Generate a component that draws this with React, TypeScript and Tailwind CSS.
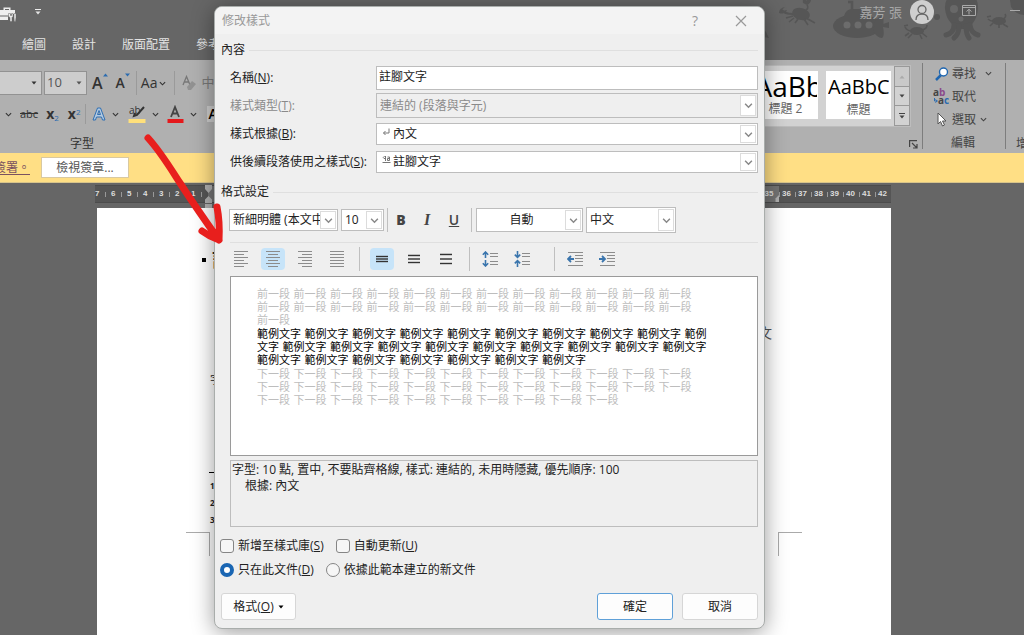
import React, { ReactNode } from "react";

const repeat = (word: string, times: number) => Array(times).fill(word).join(" ");

function Caret({ className = "" }: { className?: string }) {
  return (
    <svg width="6" height="4" viewBox="0 0 6 4" className={className} aria-hidden="true">
      <path d="M0.5 0.5h5L3 3.5z" fill="currentColor" />
    </svg>
  );
}

function Chevron({ size = 7 }: { size?: number }) {
  return (
    <svg width={size} height={size} viewBox="0 0 8 8" fill="none" stroke="currentColor" strokeWidth="1.3" aria-hidden="true">
      <path d="M1 2.5L4 5.5L7 2.5" />
    </svg>
  );
}

/* ---------- Title bar ---------- */

function SeaDoodles() {
  return (
    <svg width="264" height="60" viewBox="760 0 264 60" fill="#565656" className="absolute right-0 top-0" aria-hidden="true">
      <g>
        <ellipse cx="801" cy="14" rx="9" ry="6" transform="rotate(15 801 14)" />
        <path d="M793 14q-9 0-11-4" stroke="#565656" strokeWidth="2" fill="none" />
        <path d="M779 13q0-5 6-6q-3 2-3 4l5-1q-2 5-8 3zM803 3q-1-6 4-8l-1 6l5-5q1 7-4 9z" />
        <path d="M806 10q3-2 1-5M793 16l-7 2M794 18l-5 4M806 18l9 5M804 19l4 6M798 19l-3 4" stroke="#565656" strokeWidth="1.600" fill="none" />
      </g>
      <g>
        <ellipse cx="857" cy="26" rx="24" ry="12" />
        <path d="M844 16q2-7 8-7h8q7 0 8 7z" />
        <path d="M852 10V2h-4" stroke="#565656" strokeWidth="2.500" fill="none" />
        <path d="M875 22q5-8 8-7q1 8 0 12q2 9-1 11q-5 0-9-7zM883 24l6-2v6l-6-1z" />
        <g fill="#6c6c6c">
          <circle cx="847" cy="25" r="3.500" />
          <circle cx="858" cy="25" r="3.500" />
          <circle cx="869" cy="25" r="3.500" />
        </g>
      </g>
      <g>
        <ellipse cx="917" cy="31" rx="7" ry="4" />
        <path d="M905 27q2 4 7 4M904 26l4-1M922 30q5-1 5-5M909 33l-4 3M912 34l-4 4M922 33l5 4M920 35l2 4" stroke="#565656" strokeWidth="1.600" fill="none" />
        <circle cx="937" cy="17" r="3" />
      </g>
      <g>
        <path d="M945 9q-1-16 17-16q17 0 16 16q-1 9-5 14l-4 6h-14l-4-6q-5-5-6-14z" />
        <path d="M954 25q0 8-8 10M959 26q0 8-5 12M966 26q0 8 3 12M970 25q1 8 8 10" stroke="#565656" strokeWidth="5" fill="none" strokeLinecap="round" />
        <circle cx="954" cy="9" r="4" fill="#686868" />
        <circle cx="961" cy="19" r="2.500" fill="#686868" />
      </g>
      <g>
        <ellipse cx="999" cy="21" rx="7" ry="4" />
        <path d="M988 19q3 3 7 2M987 17l4-1M1003 19q4-2 2-5M993 23l-3 3M1003 24l5 3M999 24v4" stroke="#565656" strokeWidth="1.600" fill="none" />
        <path d="M1010 0h14v15q-8 0-13-8zM760 24l6 8l3 6l-5-1z" />
      </g>
    </svg>
  );
}

function TitleBar() {
  return (
    <header className="relative flex h-[60px] flex-col bg-[#666] text-[#e4e4e4]">
      <SeaDoodles />
      <div className="relative flex h-6 items-center">
        <button aria-label="工具箱" className="mt-1 text-[#eee]">
          <svg width="17" height="15" viewBox="0 0 17 15" fill="currentColor">
            <path d="M0 3h3.500V0.500h7V3H15v4H9v1.500H0zM5 2v1h4V2zM0 9.500h8V13H0z" fillRule="evenodd" />
            <path d="M8.500 6.500h2v2h1v-2h1.500v3l-1 1V14.500h-2v-4l-1.500-1zM14 6.500h2v4l-.5 4h-1.200l-.3-4z" stroke="#666" strokeWidth="0.500" />
          </svg>
        </button>
        <button aria-label="自訂快速存取工具列" className="ml-[18px] flex flex-col items-center gap-px">
          <span className="h-px w-[6px] bg-[#eee]" />
          <Caret />
        </button>
        <span className="ml-auto text-[13px] leading-4 text-[#a8a8a8]">嘉芳 張</span>
        <button aria-label="帳戶" className="ml-2 flex size-6 items-center justify-center rounded-full bg-[#cfcfcf] text-[#666]">
          <svg width="16" height="17" viewBox="0 0 16 17" fill="none" stroke="currentColor" strokeWidth="1.300">
            <circle cx="8" cy="5.500" r="4" />
            <path d="M2 16q0-6 6-6t6 6" />
          </svg>
        </button>
        <button aria-label="功能區顯示選項" className="-mt-1 ml-7 text-[#aaa]">
          <svg width="14" height="11" viewBox="0 0 14 11" fill="none" stroke="currentColor">
            <path d="M0.500 0.500h13v10H0.500zM0.500 2.500h13M7 9.500V4.500M4.500 6.500L7 4.300l2.500 2.200" />
          </svg>
        </button>
        <button aria-label="最小化" className="-mt-1 ml-[34px] flex h-4 w-[14px] items-center">
          <span className="h-px w-[10px] bg-[#aaa]" />
        </button>
      </div>
      <nav className="relative ml-[22px] mt-[13px] flex gap-[26px] text-xs leading-4">
        {["繪圖", "設計", "版面配置", "參考資料"].map((tab) => (
          <button key={tab}>{tab}</button>
        ))}
      </nav>
    </header>
  );
}

/* ---------- Ribbon ---------- */

function FontGroup() {
  return (
    <section className="flex w-[230px] flex-col text-[#333]">
      <div className="mt-[11px] flex h-6 items-center">
        <button aria-label="字型名稱" className="flex h-6 w-[42px] items-center justify-end border border-l-0 border-[#929292] bg-[#cdcdcd] pr-1">
          <Caret />
        </button>
        <button aria-label="字型大小" className="ml-[2px] flex h-6 w-[43px] items-center justify-between border border-[#929292] bg-[#cdcdcd] pl-[2px] pr-1 text-[13px] text-[#555]">
          10
          <Caret />
        </button>
        <button aria-label="放大字型" className="ml-[5px] flex items-start text-base font-semibold leading-5">
          A
          <svg width="5" height="4" viewBox="0 0 5 4"><path d="M2.500 0.500L5 3.500H0z" fill="#2c6cb0" /></svg>
        </button>
        <button aria-label="縮小字型" className="ml-2 flex items-start text-sm font-semibold leading-5">
          A
          <svg width="5" height="4" viewBox="0 0 5 4"><path d="M0 0.500h5L2.500 3.500z" fill="#2c6cb0" /></svg>
        </button>
        <span className="ml-[6px] h-6 w-px bg-[#9a9a9a]" />
        <button aria-label="大小寫轉換" className="ml-1 flex items-center gap-[2px] text-sm">
          Aa <Chevron />
        </button>
        <span className="ml-2 h-6 w-px bg-[#9a9a9a]" />
        <button aria-label="清除格式" className="ml-[7px] flex text-[#777]">
          <svg width="14" height="16" viewBox="0 0 14 16" fill="none">
            <path d="M1 10L4.500 1.500L8 10M2.200 7h4.500" stroke="#777" strokeWidth="1.300" />
            <path d="M5 12l5-6l4 3l-5 6h-3z" fill="#929292" />
          </svg>
        </button>
        <button className="ml-[5px] text-[13px] text-[#777]">中</button>
      </div>
      <div className="mt-2 flex h-[22px] items-center">
        <span className="ml-[5px]"><Chevron /></span>
        <button aria-label="刪除線" className="ml-2 text-[11px] line-through">abc</button>
        <button aria-label="下標" className="ml-2 text-sm font-bold leading-4">
          x<sub className="text-[8px] font-normal text-[#2c6cb0]">2</sub>
        </button>
        <button aria-label="上標" className="ml-[9px] text-sm font-bold leading-4">
          x<sup className="text-[8px] font-normal text-[#2c6cb0]">2</sup>
        </button>
        <span className="ml-[5px] h-5 w-px bg-[#9a9a9a]" />
        <button aria-label="文字效果" className="ml-[6px] flex items-center gap-[6px]">
          <svg width="14" height="14" viewBox="0 0 14 14" fill="#b4cbe2" stroke="#2f6fb3">
            <path d="M1 13L5.500 1h3L13 13h-2.500l-1-3h-5l-1 3zM5.500 7.500h3L7 3.500z" />
          </svg>
          <Chevron />
        </button>
        <button aria-label="醒目提示" className="ml-[9px] flex items-center gap-[6px]">
          <svg width="18" height="18" viewBox="0 0 18 18">
            <text x="1" y="9" fontSize="10" fill="#333">ab</text>
            <path d="M16 2l-7 8l-3 1l1-3" stroke="#333" strokeWidth="2" fill="none" />
            <path d="M0.500 14h17v4H0.500z" fill="#ffe07b" />
          </svg>
          <Chevron />
        </button>
        <button aria-label="字型色彩" className="ml-2 flex items-center gap-[6px]">
          <svg width="17" height="18" viewBox="0 0 17 18">
            <path d="M4 12L8 2l4 10M5.500 8.500h5" stroke="#444" strokeWidth="1.800" fill="none" />
            <path d="M0.500 14h16v4H0.500z" fill="#e5191c" />
          </svg>
          <Chevron />
        </button>
        <button aria-label="字元網底" className="ml-[10px] bg-[#cbcbcb] px-px text-sm font-semibold leading-4 text-black">A</button>
      </div>
      <span className="ml-[70px] mt-[11px] text-xs leading-4">字型</span>
    </section>
  );
}

function StyleGallery() {
  return (
    <section className="mt-[5px] flex w-[180px] flex-col items-end">
      <div className="flex border border-[#bdbdbd] bg-[#d2d2d2]">
        <button className="mr-2 mt-[5px] flex h-12 w-[65px] flex-col items-center overflow-hidden bg-white text-xs leading-4 text-[#666]">
          <span className="flex h-[30px] w-[62px] items-center overflow-hidden text-[28px] leading-7 text-black">AaBbC</span>
          標題 2
        </button>
        <button className="mr-[3px] mt-[5px] flex h-12 w-[65px] flex-col items-center overflow-hidden bg-white text-xs leading-4 text-[#666]">
          <span className="flex h-[31px] w-[61px] items-center overflow-hidden text-[20px] leading-6 text-black">AaBbCc</span>
          標題
        </button>
        <div className="flex w-4 flex-col divide-y divide-[#999] border border-[#999]">
          <button aria-label="上一列" className="flex h-[20px] items-center justify-center bg-[#c9c9c9] text-[#aaa]"><Caret className="rotate-180" /></button>
          <button aria-label="下一列" className="flex h-[19px] items-center justify-center text-[#444]"><Caret /></button>
          <button aria-label="其他樣式" className="flex h-[19px] flex-col items-center justify-center gap-px text-[#444]">
            <span className="h-px w-[6px] bg-[#444]" />
            <Caret />
          </button>
        </div>
      </div>
      <button aria-label="樣式窗格" className="-mr-[7px] mt-[13px] text-[#444]">
        <svg width="9" height="9" viewBox="0 0 9 9" fill="none" stroke="currentColor" strokeWidth="1.200">
          <path d="M0.600 7V0.600H8M3 3l5 5M8 4v4H4" />
        </svg>
      </button>
    </section>
  );
}

function EditingGroup() {
  return (
    <section className="ml-[11px] mt-[3px] flex h-[86px] w-[84px] flex-col border-x border-[#7d7d7d] pl-3 text-xs leading-4 text-[#444]">
      <button className="mt-[3px] flex h-[15px] items-center">
        <svg width="14" height="14" viewBox="0 0 14 14" className="mr-[3px]">
          <path d="M1 13L6 8" stroke="#1f66b0" strokeWidth="2.500" />
          <circle cx="8.500" cy="5" r="4" fill="#fff" stroke="#1f66b0" strokeWidth="1.400" />
        </svg>
        尋找
        <span className="ml-[9px]"><Chevron /></span>
      </button>
      <button className="mt-2 flex h-[15px] items-center">
        <svg width="16" height="17" viewBox="0 0 16 17" className="-ml-[2px] mr-[3px]" fontSize="10" fontWeight="700">
          <text x="0" y="8" fill="#444">a<tspan fill="#8b4a8b">b</tspan></text>
          <text x="5" y="16" fill="#444">a<tspan fill="#2c6cb0">c</tspan></text>
          <path d="M1.500 10v3h3M2.500 11.300L4.200 13l-1.700 1.700" stroke="#2c6cb0" fill="none" />
        </svg>
        取代
      </button>
      <button className="mt-2 flex h-[15px] items-center">
        <svg width="10" height="15" viewBox="0 0 10 15" className="ml-[2px] mr-[5px]">
          <path d="M1 1v11l2.500-2.500L5.500 14l2-1L5.500 9H9z" fill="#fff" stroke="#555" />
        </svg>
        選取
        <span className="ml-1"><Chevron /></span>
      </button>
      <span className="ml-4 mt-2">編輯</span>
    </section>
  );
}

function Ribbon() {
  return (
    <div className="flex h-[93px] justify-between overflow-hidden bg-[#b0b0b0]">
      <FontGroup />
      <div className="flex">
        <StyleGallery />
        <EditingGroup />
        <section className="flex w-[18px] flex-col items-end justify-end overflow-hidden pb-px text-xs leading-4 text-[#444]">
          <span className="w-2 overflow-hidden whitespace-nowrap">增益集</span>
        </section>
      </div>
    </div>
  );
}

function MessageBar() {
  return (
    <div className="flex h-[30px] items-center border-b border-[#d8c48a] bg-[#ffdf85] text-xs text-[#555]">
      <a href="#signature" className="flex h-4 w-[30px] justify-end overflow-hidden whitespace-nowrap leading-4 text-[#7a5260] underline underline-offset-2">簽署。</a>
      <button className="ml-[11px] h-[21px] w-[88px] border border-[#d9c9a0] bg-white leading-4">檢視簽章...</button>
    </div>
  );
}

/* ---------- Document ---------- */

function Ruler() {
  return (
    <div className="mt-[2px] flex h-[18px] border-y border-[#4c4c4c] bg-[#737373] font-['Liberation_Sans',sans-serif] text-[8px] font-bold leading-4 text-[#ddd]">
      <div className="flex w-[113px] bg-[#555]">
        {[7, 6, 5, 4, 3, 2, 1].map((n) => (
          <span key={n} className="flex w-4 items-center gap-[6px]">
            {n}
            <span className="h-[5px] w-px bg-[#999]" />
          </span>
        ))}
      </div>
      <svg width="9" height="26" viewBox="0 0 9 26" fill="#b0b0b0" className="-mx-1 -mt-px" aria-hidden="true">
        <path d="M1 0h7v4L4.500 8L1 4zM4.500 11L8 14.500V18H1v-3.500zM1 19h7v4H1z" />
      </svg>
      <span className="ml-auto flex w-4 items-center justify-center pr-1">35</span>
      <svg width="8" height="7" viewBox="0 0 8 7" fill="#b0b0b0" className="-mx-1 self-end" aria-hidden="true">
        <path d="M4 0L7.500 3.500V7h-7V3.500z" />
      </svg>
      <div className="flex bg-[#555]">
        {[36, 37, 38, 39, 40, 41, 42].map((n) => (
          <span key={n} className="flex w-4 items-center justify-between pr-1">
            <span className="h-[5px] w-px bg-[#999]" />
            {n}
          </span>
        ))}
      </div>
    </div>
  );
}

function Workspace() {
  return (
    <main className="flex flex-1 flex-col bg-[#666] pl-[95px] pr-[133px]">
      <Ruler />
      <article className="ml-[2px] mt-[5px] flex flex-1 flex-col bg-white text-[#222]">
        <h1 className="ml-[105px] mt-10 flex h-6 items-center gap-[6px] text-xl font-bold leading-6">
          <span className="size-1 bg-black" />註
        </h1>
        <p className="ml-auto mr-[119px] mt-[53px] text-sm leading-4 text-[#555]">文</p>
        <p className="ml-[113px] mt-[31px] text-[11px] leading-4">字</p>
        <div className="ml-[112px] mt-[84px] w-10 border-t border-black" />
        <ol className="ml-[113px] mt-1 text-[8px] font-bold leading-[17px]">
          <li>1</li>
          <li>2</li>
          <li>3</li>
        </ol>
        <div className="mx-[89px] mt-1 flex justify-between">
          <span className="h-6 w-6 border-r border-t border-[#aaa]" />
          <span className="h-6 w-6 border-l border-t border-[#aaa]" />
        </div>
      </article>
    </main>
  );
}

/* ---------- Dialog ---------- */

type PickerProps = {
  id?: string;
  label?: string;
  value: string;
  box: string;
  text?: string;
  disabled?: boolean;
  icon?: ReactNode;
};

function Picker({ id, label, value, box, text = "pl-1", disabled, icon }: PickerProps) {
  return (
    <div className={`grid border border-[#bdbdbd] ${disabled ? "bg-[#efefef]" : "bg-white"} ${box}`}>
      <select
        id={id}
        aria-label={label}
        disabled={disabled}
        defaultValue={value}
        className={`col-start-1 row-start-1 w-full min-w-0 appearance-none overflow-hidden bg-transparent pr-4 outline-none ${disabled ? "text-[#8a8a8a] opacity-100" : "text-[#222]"} ${text}`}
      >
        <option>{value}</option>
      </select>
      {icon && <span className="pointer-events-none col-start-1 row-start-1 ml-[5px] mt-1 justify-self-start">{icon}</span>}
      <span className="pointer-events-none col-start-1 row-start-1 my-px mr-px flex w-4 items-center justify-center justify-self-end border border-[#dcdcdc] bg-white text-[#888]">
        <Chevron size={9} />
      </span>
    </div>
  );
}

function SectionTitle({ children, height }: { children: ReactNode; height: string }) {
  return (
    <div className={`flex items-center gap-1 pl-[6px] pr-[6px] ${height}`}>
      <h2>{children}</h2>
      <span className="h-px flex-1 bg-[#dfdfdf]" />
    </div>
  );
}

function Lines({ rows, bold }: { rows: number[][]; bold?: boolean }) {
  return (
    <svg width="14" height="16" viewBox="0 0 14 16" stroke={bold ? "#333" : "#8c8c8c"} strokeWidth={bold ? 1.4 : 1} aria-hidden="true">
      {rows.map(([y, from, to]) => (
        <path key={y} d={`M${from} ${y}H${to}`} />
      ))}
    </svg>
  );
}

const alignRows = (align: "left" | "center" | "right" | "full") =>
  [0.5, 3.5, 6.5, 9.5, 12.5, 15.5].map((y, i) => {
    if (align === "full" || i % 2 === 0) return [y, 0, 14];
    if (align === "left") return [y, 0, 10];
    if (align === "right") return [y, 4, 14];
    return [y, 2, 12];
  });

function ToolButton({ label, active, children }: { label: string; active?: boolean; children: ReactNode }) {
  return (
    <button aria-label={label} className={`flex h-[22px] w-6 items-center justify-center rounded-sm ${active ? "bg-[#c7e4f9]" : ""}`}>
      {children}
    </button>
  );
}

function SpacingIcon({ grow }: { grow: boolean }) {
  return (
    <svg width="16" height="16" viewBox="0 0 16 16" fill="none" aria-hidden="true">
      <path
        d={
          grow
            ? "M3.500 7V1M0.800 3.700L3.500 1L6.200 3.700M3.500 9v6M0.800 12.300L3.500 15L6.200 12.300"
            : "M3.500 0v6M0.800 3.600L3.500 6.300L6.200 3.600M3.500 16v-6M0.800 12.400L3.500 9.700L6.200 12.400"
        }
        stroke="#3a75ad"
        strokeWidth="1.600"
      />
      <path d="M8 2.500h8M8 5.500h8M8 10.500h8M8 13.500h8" stroke="#8c8c8c" />
    </svg>
  );
}

function IndentIcon({ out }: { out: boolean }) {
  return (
    <svg width="16" height="16" viewBox="0 0 16 16" fill="none" aria-hidden="true">
      <path d="M1 1.500h15M8 4.500h8M8 7.500h8M8 10.500h8M1 14.500h15" stroke="#8c8c8c" />
      <path d={out ? "M7 8H1.500M4 5L1 8l3 3" : "M0 8h5.500M3 5l3 3l-3 3"} stroke="#3a75ad" strokeWidth="1.800" />
    </svg>
  );
}

function Divider({ className }: { className: string }) {
  return <span className={`h-6 w-px bg-[#bfbfbf] ${className}`} />;
}

function StyleDialog() {
  return (
    <div
      role="dialog"
      aria-label="修改樣式"
      className="absolute left-[214px] top-[6px] w-[551px] overflow-hidden rounded-lg border border-[#a9adab] bg-[#efefef] text-xs leading-4 text-[#222] shadow-[0_3px_22px_rgba(0,0,0,0.4)]"
    >
      <div className="flex h-[27px] items-center bg-[#f3f3f3] pl-[7px] text-[#999]">
        <span className="flex-1">修改樣式</span>
        <button aria-label="說明" className="w-8 text-sm">?</button>
        <button aria-label="關閉" className="ml-6 mr-[17px]">
          <svg width="12" height="12" viewBox="0 0 12 12" stroke="currentColor" strokeWidth="1.200"><path d="M1 1l10 10M11 1L1 11" /></svg>
        </button>
      </div>

      <SectionTitle height="h-8">內容</SectionTitle>
      <div className="grid grid-cols-[146px_1fr] items-center pl-[15px] pr-[6px]">
        <label htmlFor="style-name">名稱(<u>N</u>):</label>
        <input id="style-name" defaultValue="註腳文字" className="h-6 w-full border border-[#bdbdbd] bg-white pb-1 pl-[2px] outline-none" />
        <label htmlFor="style-type" className="mt-[3px] text-[#8a8a8a]">樣式類型(<u>T</u>):</label>
        <Picker id="style-type" value="連結的 (段落與字元)" box="mt-[3px] h-[25px]" text="pl-[3px]" disabled />
        <label htmlFor="style-base" className="mt-[5px]">樣式根據(<u>B</u>):</label>
        <Picker
          id="style-base"
          value="內文"
          box="mt-[5px] h-[22px]"
          text="pl-4"
          icon={
            <svg width="9" height="8" viewBox="0 0 9 8" fill="none" stroke="#777"><path d="M7 0.500v4.500H1.500M3.500 3L1.500 5l2 2" /></svg>
          }
        />
        <label htmlFor="style-next" className="mt-[6px]">供後續段落使用之樣式(<u>S</u>):</label>
        <Picker
          id="style-next"
          value="註腳文字"
          box="mt-[6px] h-[22px]"
          text="pl-4"
          icon={
            <svg width="9" height="8" viewBox="0 0 9 8" fill="none" stroke="#666">
              <path d="M3.500 0v5M2 0h2M2 0.500Q0.500 1.500 2 2.500h1M5.500 1h2v3.500h-2v-2h2M0.500 6.500h8" strokeWidth="0.900" />
            </svg>
          }
        />
      </div>

      <SectionTitle height="h-[34px] pt-1">格式設定</SectionTitle>
      <div className="flex h-[26px] items-center pl-[14px]">
        <Picker label="字型" value="新細明體 (本文中文字型)" box="h-[22px] w-[109px]" text="pl-[3px]" />
        <Picker label="字型大小" value="10" box="ml-[3px] h-[22px] w-[43px]" text="pl-[3px]" />
        <Divider className="ml-[3px]" />
        <button aria-label="粗體" className="ml-[3px] w-5 text-sm font-extrabold text-[#444]">B</button>
        <button aria-label="斜體" className="ml-[6px] w-5 font-['Liberation_Serif',serif] text-base font-bold italic text-[#444]">I</button>
        <button aria-label="底線" className="ml-[7px] w-5 text-sm font-semibold text-[#444] underline">U</button>
        <Divider className="ml-[7px]" />
        <Picker label="字型色彩" value="自動" box="ml-1 h-6 w-[107px]" text="[text-align-last:center]" />
        <Picker label="語言" value="中文" box="ml-[3px] h-[26px] w-[90px]" text="pl-[3px]" />
      </div>

      <div className="ml-[15px] mr-[6px] mt-[9px] border-t border-[#dfdfdf]" />
      <div className="mt-1 flex h-6 items-center pl-[14px]">
        <div className="flex gap-2">
          <ToolButton label="靠左對齊"><Lines rows={alignRows("left")} /></ToolButton>
          <ToolButton label="置中" active><Lines rows={alignRows("center")} /></ToolButton>
          <ToolButton label="靠右對齊"><Lines rows={alignRows("right")} /></ToolButton>
          <ToolButton label="左右對齊"><Lines rows={alignRows("full")} /></ToolButton>
        </div>
        <Divider className="mx-[10px]" />
        <div className="flex gap-2">
          <ToolButton label="單行間距" active><Lines bold rows={[[5.5, 1, 13], [8, 1, 13], [10.5, 1, 13]]} /></ToolButton>
          <ToolButton label="1.5 倍行高"><Lines bold rows={[[4.5, 1, 13], [8, 1, 13], [11.5, 1, 13]]} /></ToolButton>
          <ToolButton label="2 倍行高"><Lines bold rows={[[3.5, 1, 13], [8, 1, 13], [12.5, 1, 13]]} /></ToolButton>
        </div>
        <Divider className="ml-[11px] mr-2" />
        <div className="flex gap-2">
          <ToolButton label="增加段落間距"><SpacingIcon grow /></ToolButton>
          <ToolButton label="減少段落間距"><SpacingIcon grow={false} /></ToolButton>
        </div>
        <Divider className="ml-5 mr-2" />
        <div className="flex gap-2">
          <ToolButton label="減少縮排"><IndentIcon out /></ToolButton>
          <ToolButton label="增加縮排"><IndentIcon out={false} /></ToolButton>
        </div>
      </div>

      <div className="ml-[15px] mr-[6px] mt-[5px] flex h-[180px] flex-col gap-px border border-[#9a9a9a] bg-white pl-[26px] pr-[43px] pt-[11px] font-['DejaVu_Sans','Noto_Sans_CJK_TC',sans-serif] text-[11px] leading-[13px] text-[#bdbdbd]">
        <p className="break-keep">{repeat("前一段", 25)}</p>
        <p className="text-black">{repeat("範例文字", 26)}</p>
        <p className="break-keep">{repeat("下一段", 34)}</p>
      </div>
      <div className="ml-[15px] mr-[6px] mt-1 h-[67px] border border-[#bdbdbd] pl-px pt-px">
        <p>字型: 10 點, 置中, 不要貼齊格線, 樣式: 連結的, 未用時隱藏, 優先順序: 100</p>
        <p className="pl-[13px]">根據: 內文</p>
      </div>

      <div className="mt-[10px] flex h-[18px] items-center gap-3 pl-[5px]">
        <label className="flex items-center gap-1">
          <input type="checkbox" className="size-[14px] appearance-none rounded-[3px] border border-[#858585] bg-[#f6f6f6]" />
          <span>新增至樣式庫(<u>S</u>)</span>
        </label>
        <label className="flex items-center gap-1">
          <input type="checkbox" className="size-[14px] appearance-none rounded-[3px] border border-[#858585] bg-[#f6f6f6]" />
          <span>自動更新(<u>U</u>)</span>
        </label>
      </div>
      <div className="mt-[6px] flex h-[18px] items-center gap-3 pl-[5px]">
        <label className="flex items-center gap-1">
          <input type="radio" name="scope" defaultChecked className="size-[14px] appearance-none rounded-full border border-[#858585] bg-[#f6f6f6] checked:border-4 checked:border-[#1a66b3] checked:bg-white" />
          <span>只在此文件(<u>D</u>)</span>
        </label>
        <label className="flex items-center gap-1">
          <input type="radio" name="scope" className="size-[14px] appearance-none rounded-full border border-[#858585] bg-[#f6f6f6] checked:border-4 checked:border-[#1a66b3] checked:bg-white" />
          <span>依據此範本建立的新文件</span>
        </label>
      </div>
      <div className="mb-2 mt-[14px] flex h-[27px] items-stretch gap-[9px] pl-[6px] pr-[6px]">
        <button className="mr-auto flex w-[75px] items-center justify-center gap-1 rounded-[3px] border border-[#d6d6d6] bg-[#fdfdfd]">
          <span>格式(<u>O</u>)</span>
          <Caret className="text-black" />
        </button>
        <button className="w-[76px] rounded-[3px] border border-[#5fa0d8] bg-[#fdfdfd]">確定</button>
        <button className="w-[76px] rounded-[3px] border border-[#d6d6d6] bg-[#fdfdfd]">取消</button>
      </div>
    </div>
  );
}

export default function App() {
  return (
    <div className="relative flex h-screen flex-col overflow-hidden font-['Open_Sans','Noto_Sans_CJK_TC',sans-serif]">
      <TitleBar />
      <Ribbon />
      <MessageBar />
      <Workspace />
      <StyleDialog />
      <svg width="84" height="118" viewBox="0 0 84 118" fill="none" stroke="#e81f1d" strokeWidth="7" strokeLinecap="round" strokeLinejoin="round" className="pointer-events-none absolute left-[142px] top-[130px]" aria-hidden="true">
        <path d="M6 8C18 21 27 36 38 53S62 89 77 110M60 101Q68 107 77 110Q78 92 75 77" />
      </svg>
    </div>
  );
}
